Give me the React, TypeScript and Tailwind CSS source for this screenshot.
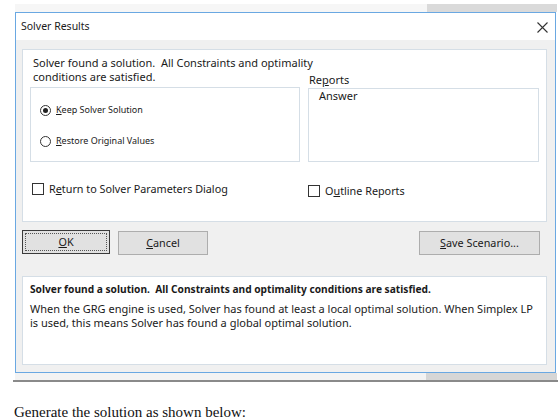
import React from "react";

const ui = { fontFamily: '"Noto Sans", "Open Sans", sans-serif' };

const Radio = ({ checked, label, u }: { checked?: boolean; label: string; u: string }) => (
  <div className="flex items-center gap-[5px] text-[9px] leading-[12px] text-[#1a1a1a]">
    <span className="flex h-[11px] w-[11px] items-center justify-center rounded-full border border-[#333] bg-white">
      {checked && <span className="h-[5px] w-[5px] rounded-full bg-[#222]" />}
    </span>
    <span>
      <span className="underline">{u}</span>
      {label}
    </span>
  </div>
);

const Check = ({ pre, u, post }: { pre: string; u: string; post: string }) => (
  <div className="flex items-center gap-[5px] text-[10.8px] text-[#1a1a1a]">
    <span className="h-[12px] w-[12px] border border-[#333] bg-white" />
    <span>
      {pre}
      <span className="underline">{u}</span>
      {post}
    </span>
  </div>
);

const Btn = ({ u, rest, w, focus }: { u: string; rest: string; w: string; focus?: boolean }) => (
  <button
    className={`h-[24px] ${w} ${
      focus ? "border border-[#3a3a3a] p-[2px]" : "border border-[#adadad]"
    } bg-[#e1e1e1] text-[10.8px] text-[#1a1a1a]`}
  >
    <span
      className={`flex h-full w-full items-center justify-center ${
        focus ? "border border-dotted border-[#555]" : ""
      }`}
    >
      <span className="underline">{u}</span>
      {rest}
    </span>
  </button>
);

export default function App() {
  return (
    <div className="h-[419px] w-[560px] overflow-hidden bg-white" style={ui}>
      <div className="flex h-[12px] items-end pl-[15px]">
        <div className="h-[8px] w-[412px] bg-[#f6f6f6]" />
        <div className="h-[8px] w-[130px] bg-[#dadada]" />
      </div>

      <div className="ml-[15px] flex w-[541px] flex-col border border-[#6aa8e2]">
        <div className="flex h-[27px] items-center justify-between bg-white pl-[5px] pr-[7px] text-[10.5px] text-[#1a1a1a]">
          <span>Solver Results</span>
          <svg width="11" height="11" viewBox="0 0 11 11" className="mt-[1px]">
            <path d="M0.5 0.5 L10.5 10.5 M10.5 0.5 L0.5 10.5" stroke="#333" strokeWidth="1.1" fill="none" />
          </svg>
        </div>

        <div className="flex h-[332px] flex-col bg-[#f0f0f0] pl-[6px] pr-[8px] pt-[9px]">
          <div className="h-[173px] border border-[#d5dee6] bg-white px-[7px] pt-[6px]">
            <div className="whitespace-pre pl-[3px] text-[11px] leading-[14px] text-[#1a1a1a]">
              {"Solver found a solution.  All Constraints and optimality"}
            </div>
            <div className="flex gap-[8px]">
              <div className="w-[270px]">
                <div className="pl-[3px] text-[11px] leading-[14px] text-[#1a1a1a]">
                  conditions are satisfied.
                </div>
                <div className="mt-[3px] flex h-[75px] flex-col gap-[19px] border border-[#d5dee6] pl-[9px] pt-[16px]">
                  <Radio checked u="K" label="eep Solver Solution" />
                  <Radio u="R" label="estore Original Values" />
                </div>
              </div>
              <div className="flex flex-1 flex-col">
                <div className="pl-[1px] pt-[3px] text-[11px] leading-[14px] text-[#1a1a1a]">
                  Re<span className="underline">p</span>orts
                </div>
                <div className="mt-[1px] h-[74px] border border-[#d5dee6] pl-[10px] text-[11px] leading-[14px] text-[#1a1a1a]">
                  Answer
                </div>
              </div>
            </div>
            <div className="mt-[19px] flex">
              <div className="w-[278px] pl-[2px]">
                <Check pre="R" u="e" post="turn to Solver Parameters Dialog" />
              </div>
              <div className="mt-[2px]">
                <Check pre="O" u="u" post="tline Reports" />
              </div>
            </div>
          </div>

          <div className="mt-[7px] flex items-center">
            <Btn focus u="O" rest="K" w="w-[88px]" />
            <div className="ml-[8px]">
              <Btn u="C" rest="ancel" w="w-[90px]" />
            </div>
            <div className="ml-auto mr-[7px]">
              <Btn u="S" rest="ave Scenario..." w="w-[121px]" />
            </div>
          </div>

          <div className="mt-[21px] h-[89px] border border-[#d5dee6] bg-white px-[7px] pt-[5px] text-[11px] text-[#1a1a1a]">
            <div className="whitespace-pre text-[10.2px] font-bold leading-[14px]">
              {"Solver found a solution.  All Constraints and optimality conditions are satisfied."}
            </div>
            <div className="mt-[6px] leading-[14px]">
              When the GRG engine is used, Solver has found at least a local optimal solution. When Simplex LP
              <br />
              is used, this means Solver has found a global optimal solution.
            </div>
          </div>
        </div>
      </div>

      <div className="flex h-[7px] pl-[15px]">
        <div className="w-[411px] bg-[#f3f3f3]" />
        <div className="w-[131px] bg-[#d6d6d6]" />
      </div>
      <div className="ml-[13px] h-[2px] w-[545px] bg-[#8a8a8a]" />

      <div
        className="mt-[22px] pl-[14px] text-[15px] leading-[17px] text-[#111]"
        style={{ fontFamily: '"Liberation Serif", serif' }}
      >
        Generate the solution as shown below:
      </div>
    </div>
  );
}
